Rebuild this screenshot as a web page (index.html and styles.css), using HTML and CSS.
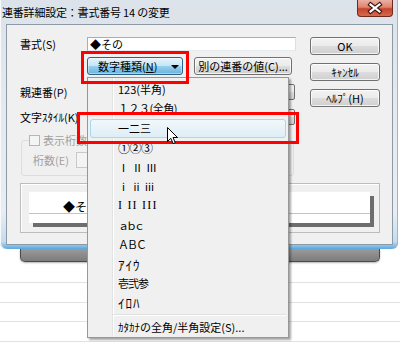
FILE: index.html
```html
<!DOCTYPE html>
<html lang="ja">
<head>
<meta charset="utf-8">
<title>連番詳細設定</title>
<link rel="stylesheet" href="styles.css">
</head>
<body>
<div class="screen">
  <div class="window">
    <div class="titlebar">
      <span class="title">連番詳細設定：書式番号 14 の変更</span>
      <span class="close">
        <svg width="34" height="16" viewBox="0 0 34 16">
          <path d="M12.5 4.5 L21.5 11.5 M21.5 4.5 L12.5 11.5" stroke="#3d1610" stroke-width="4.4" stroke-linecap="square" fill="none"/>
          <path d="M12.5 4.5 L21.5 11.5 M21.5 4.5 L12.5 11.5" stroke="#fff" stroke-width="2.2" stroke-linecap="square" fill="none"/>
        </svg>
      </span>
    </div>
    <div class="client">
      <div class="form">
        <div class="row r1"><span class="label">書式(S)</span><div class="input">◆その</div></div>
        <div class="row r2">
          <span class="btn hot split"><span>数字種類(<u>N</u>)</span><span class="tri"></span></span>
          <span class="btn other">別の連番の値(C)...</span>
        </div>
        <div class="row r3"><span class="label">親連番(P)</span><span class="combo"></span></div>
        <div class="row r4"><span class="label">文字ｽﾀｲﾙ(K)</span><span class="combo"></span></div>
        <fieldset class="group">
          <legend class="chk"><span class="box"></span>表示桁数</legend>
          <div class="digits"><span class="dlabel">桁数(E)</span><span class="dinput"></span></div>
        </fieldset>
      </div>
      <div class="buttons">
        <span class="btn">OK</span>
        <span class="btn">ｷｬﾝｾﾙ</span>
        <span class="btn">ﾍﾙﾌﾟ(H)</span>
      </div>
      <div class="preview"><div class="page"><div class="ruled">◆その</div></div></div>
    </div>
  </div>
  <div class="behind"></div>
  <div class="desk"></div>

  <div class="menu">
    <div class="item">123(半角)</div>
    <div class="item tight05">１２３(全角)</div>
    <div class="item hl">一二三</div>
    <div class="item circ">①②③</div>
    <div class="item roman">ⅠⅡⅢ</div>
    <div class="item sroman">ⅰⅱⅲ</div>
    <div class="item serif">I II III</div>
    <div class="item tight3">ａｂｃ</div>
    <div class="item tight2">ＡＢＣ</div>
    <div class="item kana">ｱｲｳ</div>
    <div class="item tight1">壱弐参</div>
    <div class="item kana">ｲﾛﾊ</div>
    <div class="sep"></div>
    <div class="item">ｶﾀｶﾅの全角/半角設定(S)...</div>
  </div>
  <div class="mark m1"></div>
  <div class="mark m2"></div>
  <svg class="cursor" width="12" height="18" viewBox="0 0 12 18">
    <path d="M0.5 0.5 V14.5 L3.8 11.3 L6.2 16.6 L8.3 15.7 L6 10.5 H10.5 Z" fill="#fff" stroke="#000" stroke-width="1" stroke-linejoin="miter"/>
  </svg>
</div>
</body>
</html>
```

FILE: styles.css
```css
* { box-sizing: border-box; }
html, body { margin: 0; padding: 0; }
body {
  width: 400px;
  height: 342px;
  overflow: hidden;
  background: #fff;
  font-family: "Noto Sans CJK JP", "Noto Sans", sans-serif;
  font-size: 11px;
  color: #000;
}
.screen {
  position: relative;
  width: 400px;
  height: 342px;
  background: #fff;
}

/* window frame */
.window {
  width: 398px;
  background: linear-gradient(to bottom, #dce2e9 0, #e5e9ee 40%, #e9edf1 85%, #c4dcef 97%, #5aa9df 100%);
  border-radius: 0 0 6px 6px;
  padding-bottom: 4px;
  box-shadow: inset -1px 0 0 #9fb5c8, inset 1px 0 0 #f7f9fb;
}
.titlebar {
  height: 24px;
  display: flex;
  justify-content: space-between;
  align-items: flex-start;
  padding: 0 5px 0 2px;
}
.title {
  font-size: 11px;
  line-height: 25px;
  white-space: nowrap;
  letter-spacing: -0.2px;
}
.close {
  display: block;
  width: 36px;
  height: 17px;
  border: 1px solid #6f2a20;
  border-top: none;
  border-radius: 0 0 4px 4px;
  background: linear-gradient(to bottom, #ebb0a1 0, #de8370 45%, #c6442c 55%, #d5694f 100%);
}
.close svg { display: block; }

/* client area */
.client {
  margin: 0 5px 0 6px;
  border: 1px solid #8c9aa8;
  background: #f0f0f0;
  padding: 12px 12px 11px 13px;
  display: grid;
  grid-template-columns: 276px 70px;
  column-gap: 14px;
  align-items: start;
}
.form { display: flex; flex-direction: column; }
.row { display: flex; align-items: center; }
.label {
  width: 67px;
  flex: none;
  white-space: nowrap;
  line-height: 14px;
}
.r1 { height: 14px; }
.input {
  width: 209px;
  height: 14px;
  border: 1px solid #abadb3;
  border-right-color: #dbdfe6;
  border-bottom-color: #e3e9ef;
  background: #fff;
  padding-left: 2px;
  line-height: 12px;
  white-space: nowrap;
}
.r2 { margin-top: 6px; padding-left: 67px; gap: 11px; }
.r3 { margin-top: 9px; }
.r4 { margin-top: 9px; }
.combo {
  width: 208px;
  height: 16px;
  border: 1px solid #707070;
  border-radius: 2px;
  background: linear-gradient(#f2f2f2, #ebebeb 50%, #dddddd 50%, #cfcfcf);
}

.btn {
  height: 18px;
  border: 1px solid #707070;
  border-radius: 3px;
  background: linear-gradient(to bottom, #f2f2f2 0, #ebebeb 50%, #dddddd 50%, #cfcfcf 100%);
  box-shadow: inset 0 0 0 1px rgba(255, 255, 255, 0.75);
  display: flex;
  align-items: center;
  justify-content: center;
  line-height: 14px;
  white-space: nowrap;
}
.btn.hot {
  border-color: #2c628b;
  background: linear-gradient(to bottom, #e5f4fc 0, #c4e5f6 50%, #98d1ef 50%, #68b3db 100%);
  box-shadow: inset 0 0 0 1px rgba(255, 255, 255, 0.4);
}
.split {
  width: 96px;
  justify-content: space-between;
  padding: 0 3px 0 10px;
}
.tri {
  width: 0;
  height: 0;
  border-left: 4px solid transparent;
  border-right: 4px solid transparent;
  border-top: 4px solid #000;
  margin-top: 2px;
}
.other { width: 98px; }

/* group */
.group {
  margin: 9px 0 0 1px;
  width: 273px;
  min-inline-size: 0;
  border: 1px solid #d5dfe5;
  border-radius: 3px;
  padding: 6px 0 7px 7px;
}
.chk {
  padding: 0 2px 0 0;
  display: flex;
  align-items: center;
  gap: 3px;
  color: #a0a0a0;
  line-height: 12px;
  height: 12px;
  white-space: nowrap;
}
.box {
  width: 11px;
  height: 11px;
  border: 1px solid #b6b6b6;
  background: #f4f4f4;
}
.digits {
  display: flex;
  align-items: center;
  height: 16px;
  padding-left: 4px;
}
.dlabel { width: 43px; color: #a0a0a0; white-space: nowrap; }
.dinput {
  width: 60px;
  height: 16px;
  border: 1px solid #c9c9c9;
  background: #f4f4f4;
}

.buttons { display: flex; flex-direction: column; gap: 8px; }

/* preview */
.preview {
  grid-column: 1 / -1;
  margin-top: 7px;
  height: 50px;
  border: 1px solid #bcbcbc;
  box-shadow: inset 1px 1px 0 #fff;
  padding: 8px 9px 9px 8px;
}
.page {
  height: 31px;
  background: #fff;
  box-shadow: 4px 4px 0 #6d6d6d;
}
.ruled {
  height: 22px;
  border-bottom: 1px solid #c4c4c4;
  padding-left: 34px;
  font-size: 12px;
  line-height: 13px;
  display: flex;
  align-items: flex-end;
  white-space: nowrap;
}

/* background behind dialog */
.behind {
  margin: 0 20px;
  height: 13px;
  border: 1px solid #4a4a4a;
  border-top: none;
  border-radius: 0 0 5px 5px;
  background: linear-gradient(to bottom, #9a9a9a, #7c7c7c);
  box-shadow: 0 1px 2px rgba(0, 0, 0, 0.3);
}
.desk {
  height: 80px;
  background-image: repeating-linear-gradient(to bottom, transparent 0, transparent 18.5px, #e2e2e2 18.5px, #e2e2e2 19.5px);
  background-repeat: no-repeat;
  background-size: 100% 80px;
  background-position: 0 2px;
}

/* dropdown menu */
.menu {
  position: absolute;
  left: 87px;
  top: 77px;
  width: 202px;
  height: 261px;
  border: 1px solid #979797;
  padding: 2px;
  background: #f0f0f0 linear-gradient(to right, transparent 24px, #e2e3e3 24px, #e2e3e3 25px, #fff 25px, #fff 26px, transparent 26px);
  box-shadow: 2px 2px 2px rgba(0, 0, 0, 0.35);
}
.item {
  height: 19.4px;
  line-height: 17.4px;
  border: 1px solid transparent;
  border-radius: 3px;
  padding-left: 27px;
  white-space: nowrap;
}
.item.hl {
  border-color: #a8d8eb;
  background: linear-gradient(to bottom, #f1f8fb, #deeef6);
}
.item.serif { font-family: "Liberation Serif", serif; letter-spacing: 1.2px; font-size: 12px; }
.item.circ { font-size: 12px; letter-spacing: -0.5px; }
.item.roman { letter-spacing: 3px; }
.item.sroman { letter-spacing: 2px; }
.item.kana { font-size: 13px; letter-spacing: 1px; }
.item.tight05 { letter-spacing: -0.5px; }
.item.tight1 { letter-spacing: -1px; }
.item.tight2 { letter-spacing: -2px; }
.item.tight3 { letter-spacing: -3px; }
.sep {
  height: 5px;
  margin-left: 23px;
  background: linear-gradient(to bottom, transparent 1px, #e0e0e0 1px, #e0e0e0 2px, #fff 2px, #fff 3px, transparent 3px);
}

/* annotations */
.mark {
  position: absolute;
  border: 3px solid #f00;
}
.m1 { left: 81px; top: 51px; width: 108px; height: 33px; }
.m2 { left: 77px; top: 112px; width: 222px; height: 32px; }
.cursor {
  position: absolute;
  left: 167px;
  top: 127px;
}
```
